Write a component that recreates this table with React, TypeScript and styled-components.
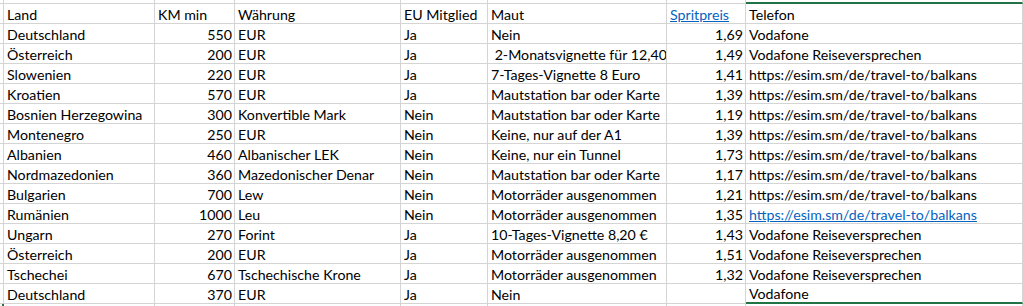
import { Fragment } from 'react';
import styled, { createGlobalStyle } from 'styled-components';

const GlobalStyle = createGlobalStyle`
    html, body {
        margin: 0;
        padding: 0;
        background: #ffffff;
        overflow: hidden;
    }
`;

const Sheet = styled.div`
    display: grid;
    grid-template-columns: 4px 151px 80px 166px 87px 179px 79px 1fr;
    grid-auto-rows: 20px;
    grid-template-rows: 4px;
    width: 1023px;
    height: 306px;
    overflow: hidden;
    font-family: Lato, 'Liberation Sans', sans-serif;
    font-size: 14.2px;
    color: #000000;
`;

const Cell = styled.div<{ $right?: boolean; $link?: boolean; $sel?: boolean }>`
    box-sizing: border-box;
    border-right: 1px solid #d4d4d4;
    border-bottom: 1px solid #d4d4d4;
    padding: 0 2px 0 3px;
    display: flex;
    align-items: flex-end;
    justify-content: ${(p) => (p.$right ? 'flex-end' : 'flex-start')};
    white-space: pre;
    overflow: hidden;
    line-height: 17px;
    color: ${(p) => (p.$link ? '#0563c1' : 'inherit')};
    text-decoration: ${(p) => (p.$link ? 'underline' : 'none')};
    ${(p) => p.$sel && 'border-bottom: 2px solid #217346;'}
`;

const Stub = styled(Cell)<{ $mark?: boolean }>`
    padding: 0;
    ${(p) => p.$mark && 'border-right: 2px solid #217346;'}
`;

type Row = [string, string, string, string, string, string, string];

const esim = 'https://esim.sm/de/travel-to/balkans';
const reise = 'Vodafone Reiseversprechen';

const rows: Row[] = [
    ['Deutschland', '550', 'EUR', 'Ja', 'Nein', '1,69', 'Vodafone'],
    ['Österreich', '200', 'EUR', 'Ja', ' 2-Monatsvignette für 12,40', '1,49', reise],
    ['Slowenien', '220', 'EUR', 'Ja', '7-Tages-Vignette 8 Euro', '1,41', esim],
    ['Kroatien', '570', 'EUR', 'Ja', 'Mautstation bar oder Karte', '1,39', esim],
    ['Bosnien Herzegowina', '300', 'Konvertible Mark', 'Nein', 'Mautstation bar oder Karte', '1,19', esim],
    ['Montenegro', '250', 'EUR', 'Nein', 'Keine, nur auf der A1', '1,39', esim],
    ['Albanien', '460', 'Albanischer LEK', 'Nein', 'Keine, nur ein Tunnel', '1,73', esim],
    ['Nordmazedonien', '360', 'Mazedonischer Denar', 'Nein', 'Mautstation bar oder Karte', '1,17', esim],
    ['Bulgarien', '700', 'Lew', 'Nein', 'Motorräder ausgenommen', '1,21', esim],
    ['Rumänien', '1000', 'Leu', 'Nein', 'Motorräder ausgenommen', '1,35', esim],
    ['Ungarn', '270', 'Forint', 'Ja', '10-Tages-Vignette 8,20 €', '1,43', reise],
    ['Österreich', '200', 'EUR', 'Ja', 'Motorräder ausgenommen', '1,51', reise],
    ['Tschechei', '670', 'Tschechische Krone', 'Ja', 'Motorräder ausgenommen', '1,32', reise],
    ['Deutschland', '370', 'EUR', 'Ja', 'Nein', '', 'Vodafone'],
];

const linkRow = 9;

export default function App() {
    const last = rows.length - 1;
    return (
        <>
            <GlobalStyle />
            <Sheet>
                <Stub />
                <Cell />
                <Cell />
                <Cell />
                <Cell />
                <Cell />
                <Cell />
                <Cell $sel />

                <Stub />
                <Cell>Land</Cell>
                <Cell>KM min</Cell>
                <Cell>Währung</Cell>
                <Cell>EU Mitglied</Cell>
                <Cell>Maut</Cell>
                <Cell $link>Spritpreis</Cell>
                <Cell>Telefon</Cell>

                {rows.map((r, i) => (
                    <Fragment key={i}>
                        <Stub />
                        <Cell>{r[0]}</Cell>
                        <Cell $right>{r[1]}</Cell>
                        <Cell>{r[2]}</Cell>
                        <Cell>{r[3]}</Cell>
                        <Cell>{r[4]}</Cell>
                        <Cell $right>{r[5]}</Cell>
                        <Cell $link={i === linkRow} $sel={i === last}>
                            {r[6]}
                        </Cell>
                    </Fragment>
                ))}

                <Stub $mark />
                <Cell />
                <Cell />
                <Cell />
                <Cell />
                <Cell />
                <Cell />
                <Cell />
            </Sheet>
        </>
    );
}
